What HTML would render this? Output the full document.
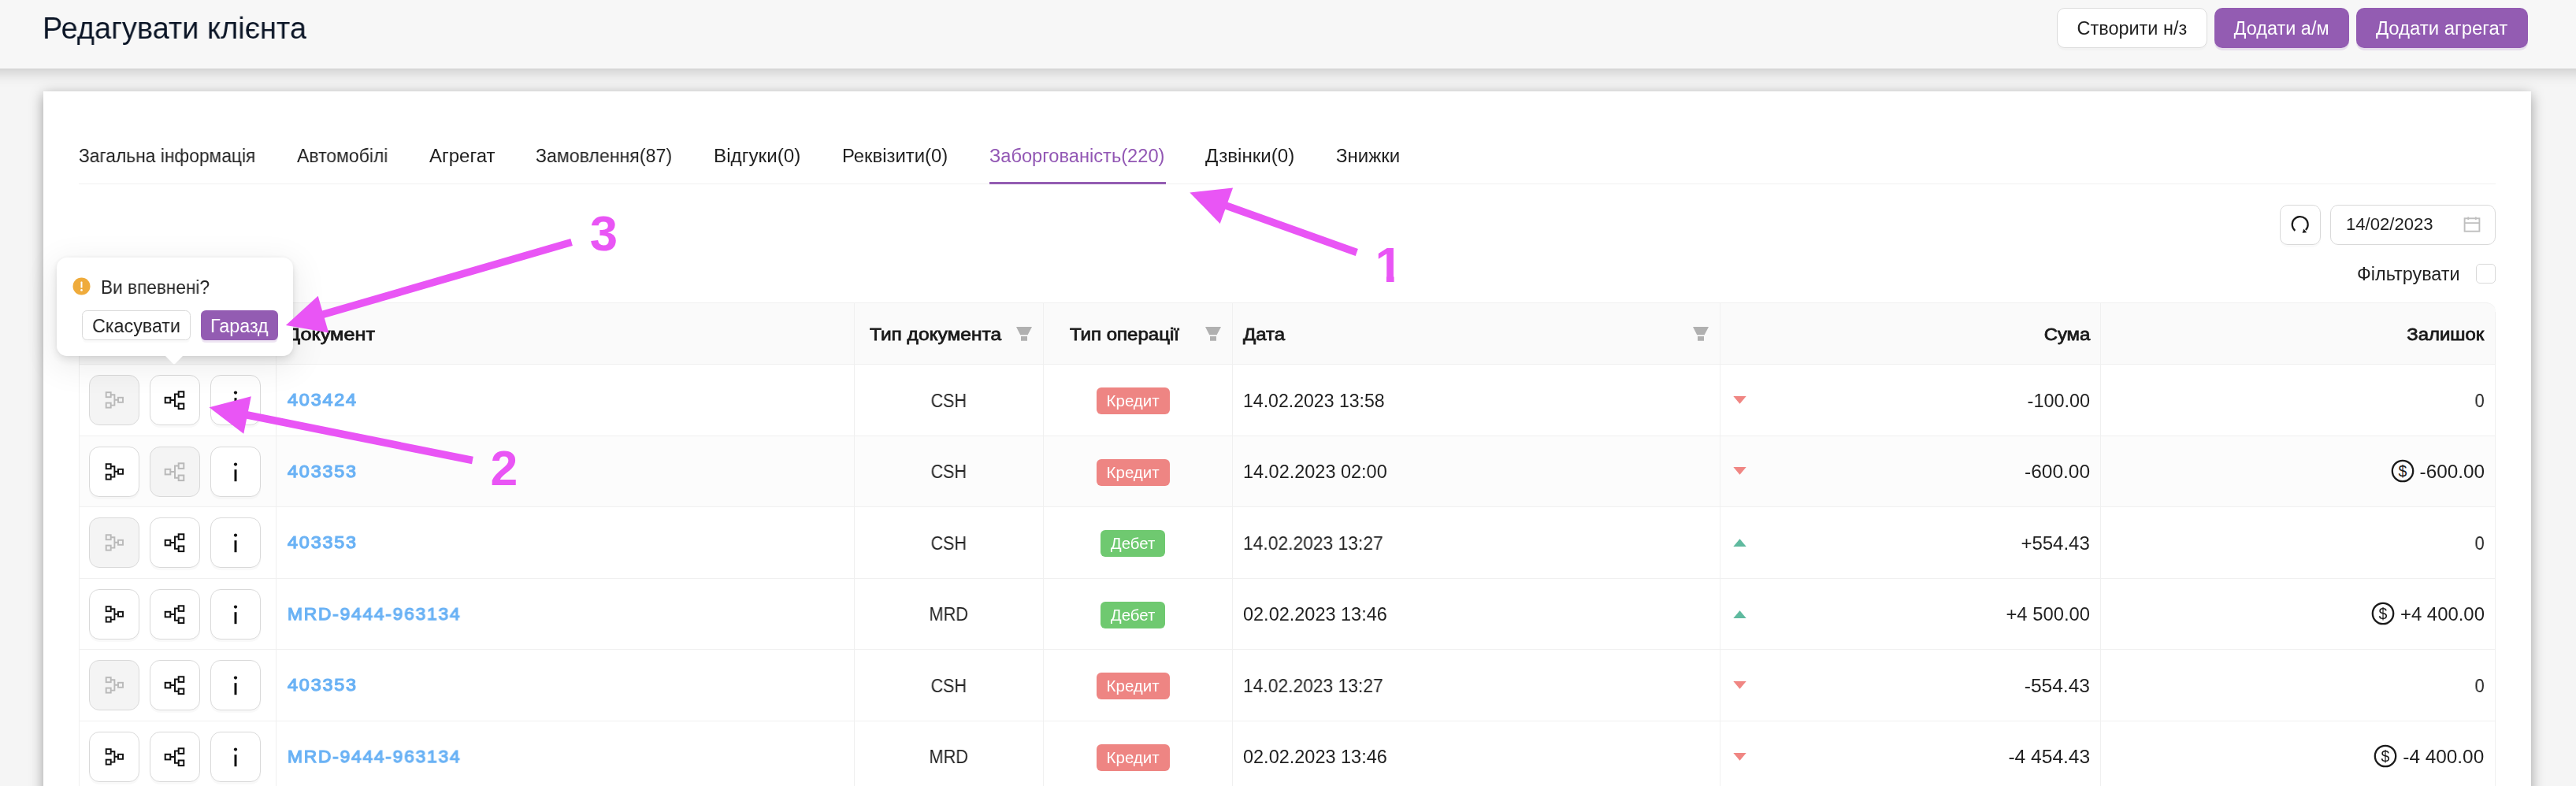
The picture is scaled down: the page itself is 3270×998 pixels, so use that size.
<!DOCTYPE html>
<html lang="uk">
<head>
<meta charset="utf-8">
<title>Редагувати клієнта</title>
<style>
*{box-sizing:border-box;}
html,body{margin:0;padding:0;}
body{width:3270px;height:998px;overflow:hidden;position:relative;background:#f5f5f5;
  font-family:"Liberation Sans","DejaVu Sans",sans-serif;font-size:22.4px;color:#262626;}
.a{position:absolute;}
.t{position:absolute;white-space:nowrap;line-height:1;display:block;will-change:transform;}
#hdr{position:absolute;left:-80px;top:0;width:3430px;height:87px;background:#f7f7f7;
  box-shadow:0 4px 18px rgba(0,0,0,.2);z-index:2;}
.hbtn{position:absolute;top:10px;height:51px;border-radius:10px;}
.hbtn.def{background:#fff;border:1.6px solid #dcdcdc;box-shadow:0 3px 0 rgba(0,0,0,.02);}
.hbtn.pri{background:#935cb2;box-shadow:0 3px 0 rgba(147,92,178,.16);}
#card{position:absolute;left:55px;top:116px;width:3158px;height:940px;background:#fff;
  box-shadow:0 4px 16px rgba(0,0,0,.36);z-index:1;}
#main{position:absolute;left:0;top:0;width:3270px;height:998px;z-index:3;}
#tabline{left:100px;top:232.6px;width:3068px;height:1.6px;background:#f0f0f0;}
#ink{left:1256px;top:230.6px;width:223.6px;height:3.4px;background:#935cb2;}
.ibtn{position:absolute;background:#fff;border:1.6px solid #d9d9d9;border-radius:10px;box-shadow:0 3px 0 rgba(0,0,0,.02);}
/* table */
.hrow{position:absolute;left:100px;top:384px;width:3068px;height:79px;background:#fafafa;border-radius:12px 12px 0 0;
  border-top:1.6px solid #f0f0f0;}
.hl{position:absolute;height:1px;left:100px;width:3068px;background:#f0f0f0;}
.vl{position:absolute;width:1px;top:384px;height:640px;background:#f0f0f0;}
.rowbg{position:absolute;left:100px;width:3068px;background:#fcfcfc;}
.rb{position:absolute;width:64px;height:64px;border-radius:13px;border:1.6px solid #d9d9d9;background:#fff;box-shadow:0 3px 0 rgba(0,0,0,.025);}
.rb.dis{background:#f4f4f4;box-shadow:none;}
.rb svg{position:absolute;left:0;top:0;}
.tag{position:absolute;height:34px;border-radius:6px;}
.tag.red{background:#ee8583;}
.tag.grn{background:#6fc970;}
/* popover */
#pop{position:absolute;left:72px;top:326.5px;width:300px;height:125px;background:#fff;border-radius:13px;
  box-shadow:0 5px 12px rgba(0,0,0,.10),0 10px 40px 6px rgba(0,0,0,.07),0 0 6px rgba(0,0,0,.05);}
#poparrow{position:absolute;left:137px;top:124.5px;width:24px;height:12px;}
.sbtn{position:absolute;top:67.7px;height:37.4px;border-radius:6.4px;}
.sbtn.def{background:#fff;border:1.6px solid #d9d9d9;box-shadow:0 3px 0 rgba(0,0,0,.02);}
.sbtn.pri{background:#935cb2;box-shadow:0 3px 0 rgba(147,92,178,.16);}
#anno{position:absolute;left:0;top:0;z-index:5;}
#hin{position:absolute;left:80px;top:0;width:3270px;height:87px;}

</style>
</head>
<body>
<header id="hdr"><div id="hin">
<span id="t1" class="t" style="left:54.3px;top:16.2px;font-size:39.4px;color:#0b1526;transform:scaleX(0.9631);transform-origin:0 0;">Редагувати клієнта</span>
<div class="hbtn def" style="left:2611.2px;width:191.2px;"><span id="t2" class="t" style="left:24.9px;top:14.2px;font-size:23.3px;color:#1f1f1f;transform:scaleX(1.0071);transform-origin:50% 0;">Створити н/з</span></div>
<div class="hbtn pri" style="left:2811px;width:171px;"><span id="t3" class="t" style="left:24.7px;top:15.2px;font-size:23.3px;color:#ffffff;transform:scaleX(1.0073);transform-origin:50% 0;">Додати а/м</span></div>
<div class="hbtn pri" style="left:2991px;width:218px;"><span id="t4" class="t" style="left:26.7px;top:15.2px;font-size:23.3px;color:#ffffff;transform:scaleX(1.0260);transform-origin:50% 0;">Додати агрегат</span></div>
</div></header>
<div id="card"></div>
<main id="main">
<nav>
<span id="t5" class="t" style="left:100.0px;top:186.6px;font-size:23.3px;color:#1f1f1f;transform:scaleX(0.9789);transform-origin:0 0;">Загальна інформація</span>
<span id="t6" class="t" style="left:376.7px;top:186.6px;font-size:23.3px;color:#1f1f1f;transform:scaleX(0.9869);transform-origin:0 0;">Автомобілі</span>
<span id="t7" class="t" style="left:544.5px;top:186.6px;font-size:23.3px;color:#1f1f1f;transform:scaleX(1.0301);transform-origin:0 0;">Агрегат</span>
<span id="t8" class="t" style="left:680.4px;top:186.6px;font-size:23.3px;color:#1f1f1f;transform:scaleX(0.9933);transform-origin:0 0;">Замовлення(87)</span>
<span id="t9" class="t" style="left:905.7px;top:186.6px;font-size:23.3px;color:#1f1f1f;transform:scaleX(1.0392);transform-origin:0 0;">Відгуки(0)</span>
<span id="t10" class="t" style="left:1069.2px;top:186.6px;font-size:23.3px;color:#1f1f1f;transform:scaleX(1.0231);transform-origin:0 0;">Реквізити(0)</span>
<span id="t11" class="t" style="left:1256.0px;top:186.6px;font-size:23.3px;color:#9257b4;transform:scaleX(1.0147);transform-origin:0 0;">Заборгованість(220)</span>
<span id="t12" class="t" style="left:1530.3px;top:186.6px;font-size:23.3px;color:#1f1f1f;transform:scaleX(1.0362);transform-origin:0 0;">Дзвінки(0)</span>
<span id="t13" class="t" style="left:1696.4px;top:186.6px;font-size:23.3px;color:#1f1f1f;transform:scaleX(1.0324);transform-origin:0 0;">Знижки</span>
</nav>
<div id="tabline" class="a"></div><div id="ink" class="a"></div>
<div class="ibtn" style="left:2894.2px;top:260.2px;width:51.4px;height:50.4px;"><svg width="51.4" height="50.4" viewBox="0 0 51.4 50.4" style="position:absolute;left:-1.6px;top:-1.6px"><path d="M19.4 32.8 A10 10 0 1 1 32.9 32.0" fill="none" stroke="#1a1a1a" stroke-width="2.2"/><path d="M28.6 35.7 L34.2 35.3 L30.4 30.6 Z" fill="#1a1a1a"/></svg></div>
<div class="ibtn" style="left:2958.2px;top:260.2px;width:209.6px;height:50.4px;box-shadow:none;"><svg width="24" height="24" viewBox="0 0 24 24" style="position:absolute;left:166.6px;top:12.2px"><rect x="2.6" y="4.3" width="18.8" height="16.4" fill="none" stroke="#bfbfbf" stroke-width="1.9"/><path d="M2.6 10.2H21.4M7.2 2.6V6M16.8 2.6V6" stroke="#bfbfbf" stroke-width="1.8" fill="none"/></svg></div>
<span id="t14" class="t" style="left:2977.8px;top:275.2px;font-size:21.3px;color:#1f1f1f;transform:scaleX(1.0376);transform-origin:0 0;">14/02/2023</span>
<span id="t15" class="t" style="left:2991.8px;top:337.1px;font-size:23.3px;color:#1f1f1f;transform:scaleX(1.0041);transform-origin:0 0;">Фільтрувати</span>
<div class="a" style="left:3143.4px;top:335.2px;width:24.4px;height:24.4px;border:1.6px solid #d9d9d9;border-radius:5px;background:#fff;"></div>
<section id="table">
<div class="hrow"></div>
<div class="rowbg" style="top:554px;height:89px;"></div>
<div class="hl" style="top:462px;"></div>
<div class="hl" style="top:553px;"></div>
<div class="hl" style="top:643px;"></div>
<div class="hl" style="top:734px;"></div>
<div class="hl" style="top:824px;"></div>
<div class="hl" style="top:915px;"></div>
<div class="hl" style="top:1005px;"></div>
<div class="vl" style="left:100px;top:396px;"></div>
<div class="vl" style="left:350px;top:384px;"></div>
<div class="vl" style="left:1084px;top:384px;"></div>
<div class="vl" style="left:1324px;top:384px;"></div>
<div class="vl" style="left:1564px;top:384px;"></div>
<div class="vl" style="left:2183px;top:384px;"></div>
<div class="vl" style="left:2666px;top:384px;"></div>
<div class="vl" style="left:3167px;top:396px;"></div>
<span id="t16" class="t" style="left:364.0px;top:413.7px;font-size:22.5px;color:#1a1a1a;transform:scaleX(1.1221);transform-origin:0 0;-webkit-text-stroke:0.8px #1a1a1a;">Документ</span>
<span id="t17" class="t" style="left:1103.5px;top:413.7px;font-size:22.5px;color:#1a1a1a;transform:scaleX(1.0882);transform-origin:0 0;-webkit-text-stroke:0.8px #1a1a1a;">Тип документа</span>
<svg class="a" style="left:1289.0px;top:414px;" width="22" height="20" viewBox="0 0 22 20"><path d="M1 1H21L15.6 11.2H6.2Z M7 13H15V18.7H7Z" fill="#b0b0b0"/></svg>
<span id="t18" class="t" style="left:1357.6px;top:413.7px;font-size:22.5px;color:#1a1a1a;transform:scaleX(1.0681);transform-origin:0 0;-webkit-text-stroke:0.8px #1a1a1a;">Тип операції</span>
<svg class="a" style="left:1529.0px;top:414px;" width="22" height="20" viewBox="0 0 22 20"><path d="M1 1H21L15.6 11.2H6.2Z M7 13H15V18.7H7Z" fill="#b0b0b0"/></svg>
<span id="t19" class="t" style="left:1577.5px;top:413.7px;font-size:22.5px;color:#1a1a1a;transform:scaleX(1.0677);transform-origin:0 0;-webkit-text-stroke:0.8px #1a1a1a;">Дата</span>
<svg class="a" style="left:2148.3px;top:414px;" width="22" height="20" viewBox="0 0 22 20"><path d="M1 1H21L15.6 11.2H6.2Z M7 13H15V18.7H7Z" fill="#b0b0b0"/></svg>
<span id="t20" class="t" style="left:2597.6px;top:413.7px;font-size:22.5px;color:#1a1a1a;transform:scaleX(1.0591);transform-origin:100% 0;-webkit-text-stroke:0.8px #1a1a1a;">Сума</span>
<span id="t21" class="t" style="left:3061.4px;top:413.7px;font-size:22.5px;color:#1a1a1a;transform:scaleX(1.0627);transform-origin:100% 0;-webkit-text-stroke:0.8px #1a1a1a;">Залишок</span>
<div class="row">
<div class="rb dis" style="left:113.2px;top:476.0px;"><div style="position:absolute;left:-1.6px;top:0.1px;width:64px;height:64px;"><svg width="64" height="64" viewBox="0 0 64 64"><g fill="none" stroke="#b9b9b9" stroke-width="1.9"><rect x="21.7" y="21.2" width="6" height="6"/><rect x="21.7" y="34.6" width="6" height="6"/><rect x="37" y="27.8" width="6" height="6"/><path d="M27.7 24.2H32.4V37.6H27.7M32.4 30.8H37"/></g></svg></div></div>
<div class="rb" style="left:190.1px;top:476.0px;"><div style="position:absolute;left:-1.6px;top:0.1px;width:64px;height:64px;"><svg width="64" height="64" viewBox="0 0 64 64"><g fill="none" stroke="#111" stroke-width="2"><rect x="19.7" y="27.8" width="6.6" height="6.6"/><rect x="36.7" y="20.3" width="6.6" height="6.6"/><rect x="36.7" y="35.5" width="6.6" height="6.6"/><path d="M36.7 23.6H32V38.8H36.7M26.3 31.1H32"/></g></svg></div></div>
<div class="rb" style="left:267.2px;top:476.0px;"><div style="position:absolute;left:-1.6px;top:0.1px;width:64px;height:64px;"><svg width="64" height="64" viewBox="0 0 64 64"><circle cx="32" cy="21.6" r="2.1" fill="#111"/><rect x="30.5" y="28.2" width="3" height="15" fill="#111"/></svg></div></div>
<span id="t22" class="t" style="left:365.0px;top:496.2px;font-size:22.8px;color:#6ab2f5;letter-spacing:1.80px;transform:scaleX(1.0238);transform-origin:0 0;-webkit-text-stroke:1.25px #6ab2f5;">403424</span>
<span id="t23" class="t" style="left:1180.1px;top:497.6px;font-size:23.0px;color:#1f1f1f;transform:scaleX(0.9328);transform-origin:50% 0;">CSH</span>
<div class="tag red" style="left:1392px;top:492px;width:93px;"><span id="t24" class="t" style="left:14.2px;top:7.6px;font-size:19.6px;color:#ffffff;transform:scaleX(1.0446);transform-origin:50% 0;">Кредит</span></div>
<span id="t25" class="t" style="left:1577.8px;top:497.6px;font-size:23.0px;color:#1f1f1f;transform:scaleX(1.0036);transform-origin:0 0;">14.02.2023 13:58</span>
<svg class="a" style="left:2199.6px;top:502.9px;" width="17" height="10" viewBox="0 0 17 10"><path d="M0.3 0H16.7L8.5 9.8Z" fill="#f08683"/></svg>
<span id="t26" class="t" style="left:2574.8px;top:497.6px;font-size:23.0px;color:#1f1f1f;transform:scaleX(1.0177);transform-origin:100% 0;">-100.00</span>
<span id="t27" class="t" style="left:3140.7px;top:497.6px;font-size:23.0px;color:#1f1f1f;transform:scaleX(0.9612);transform-origin:100% 0;">0</span>
</div>
<div class="row">
<div class="rb" style="left:113.2px;top:567.0px;"><div style="position:absolute;left:-1.6px;top:0.1px;width:64px;height:64px;"><svg width="64" height="64" viewBox="0 0 64 64"><g fill="none" stroke="#111" stroke-width="1.9"><rect x="21.7" y="21.2" width="6" height="6"/><rect x="21.7" y="34.6" width="6" height="6"/><rect x="37" y="27.8" width="6" height="6"/><path d="M27.7 24.2H32.4V37.6H27.7M32.4 30.8H37"/></g></svg></div></div>
<div class="rb dis" style="left:190.1px;top:567.0px;"><div style="position:absolute;left:-1.6px;top:0.1px;width:64px;height:64px;"><svg width="64" height="64" viewBox="0 0 64 64"><g fill="none" stroke="#b9b9b9" stroke-width="2"><rect x="19.7" y="27.8" width="6.6" height="6.6"/><rect x="36.7" y="20.3" width="6.6" height="6.6"/><rect x="36.7" y="35.5" width="6.6" height="6.6"/><path d="M36.7 23.6H32V38.8H36.7M26.3 31.1H32"/></g></svg></div></div>
<div class="rb" style="left:267.2px;top:567.0px;"><div style="position:absolute;left:-1.6px;top:0.1px;width:64px;height:64px;"><svg width="64" height="64" viewBox="0 0 64 64"><circle cx="32" cy="21.6" r="2.1" fill="#111"/><rect x="30.5" y="28.2" width="3" height="15" fill="#111"/></svg></div></div>
<span id="t28" class="t" style="left:365.0px;top:586.7px;font-size:22.8px;color:#6ab2f5;letter-spacing:1.80px;transform:scaleX(1.0238);transform-origin:0 0;-webkit-text-stroke:1.25px #6ab2f5;">403353</span>
<span id="t29" class="t" style="left:1180.1px;top:588.2px;font-size:23.0px;color:#1f1f1f;transform:scaleX(0.9328);transform-origin:50% 0;">CSH</span>
<div class="tag red" style="left:1392px;top:583px;width:93px;"><span id="t30" class="t" style="left:14.2px;top:8.2px;font-size:19.6px;color:#ffffff;transform:scaleX(1.0446);transform-origin:50% 0;">Кредит</span></div>
<span id="t31" class="t" style="left:1577.8px;top:588.2px;font-size:23.0px;color:#1f1f1f;transform:scaleX(1.0203);transform-origin:0 0;">14.02.2023 02:00</span>
<svg class="a" style="left:2199.6px;top:593.4px;" width="17" height="10" viewBox="0 0 17 10"><path d="M0.3 0H16.7L8.5 9.8Z" fill="#f08683"/></svg>
<span id="t32" class="t" style="left:2574.8px;top:588.2px;font-size:23.0px;color:#1f1f1f;transform:scaleX(1.0639);transform-origin:100% 0;">-600.00</span>
<span id="t33" class="t" style="left:3075.5px;top:588.2px;font-size:23.0px;color:#1f1f1f;transform:scaleX(1.0562);transform-origin:100% 0;">-600.00</span>
<svg class="a" style="left:3033.7px;top:582.1px;" width="32" height="32" viewBox="0 0 32 32"><circle cx="16" cy="16" r="13.2" fill="none" stroke="#1a1a1a" stroke-width="2.3"/><text x="16" y="22.6" text-anchor="middle" font-family="Liberation Sans, sans-serif" font-size="19.5" fill="#1a1a1a">$</text></svg>
</div>
<div class="row">
<div class="rb dis" style="left:113.2px;top:657.0px;"><div style="position:absolute;left:-1.6px;top:0.1px;width:64px;height:64px;"><svg width="64" height="64" viewBox="0 0 64 64"><g fill="none" stroke="#b9b9b9" stroke-width="1.9"><rect x="21.7" y="21.2" width="6" height="6"/><rect x="21.7" y="34.6" width="6" height="6"/><rect x="37" y="27.8" width="6" height="6"/><path d="M27.7 24.2H32.4V37.6H27.7M32.4 30.8H37"/></g></svg></div></div>
<div class="rb" style="left:190.1px;top:657.0px;"><div style="position:absolute;left:-1.6px;top:0.1px;width:64px;height:64px;"><svg width="64" height="64" viewBox="0 0 64 64"><g fill="none" stroke="#111" stroke-width="2"><rect x="19.7" y="27.8" width="6.6" height="6.6"/><rect x="36.7" y="20.3" width="6.6" height="6.6"/><rect x="36.7" y="35.5" width="6.6" height="6.6"/><path d="M36.7 23.6H32V38.8H36.7M26.3 31.1H32"/></g></svg></div></div>
<div class="rb" style="left:267.2px;top:657.0px;"><div style="position:absolute;left:-1.6px;top:0.1px;width:64px;height:64px;"><svg width="64" height="64" viewBox="0 0 64 64"><circle cx="32" cy="21.6" r="2.1" fill="#111"/><rect x="30.5" y="28.2" width="3" height="15" fill="#111"/></svg></div></div>
<span id="t34" class="t" style="left:365.0px;top:677.3px;font-size:22.8px;color:#6ab2f5;letter-spacing:1.80px;transform:scaleX(1.0238);transform-origin:0 0;-webkit-text-stroke:1.25px #6ab2f5;">403353</span>
<span id="t35" class="t" style="left:1180.1px;top:678.7px;font-size:23.0px;color:#1f1f1f;transform:scaleX(0.9328);transform-origin:50% 0;">CSH</span>
<div class="tag grn" style="left:1397px;top:673px;width:82px;"><span id="t36" class="t" style="left:13.9px;top:7.7px;font-size:19.6px;color:#ffffff;transform:scaleX(1.0430);transform-origin:50% 0;">Дебет</span></div>
<span id="t37" class="t" style="left:1577.8px;top:678.7px;font-size:23.0px;color:#1f1f1f;transform:scaleX(0.9924);transform-origin:0 0;">14.02.2023 13:27</span>
<svg class="a" style="left:2199.6px;top:684.0px;" width="17" height="10" viewBox="0 0 17 10"><path d="M0.3 10H16.7L8.5 0.2Z" fill="#5fba9f"/></svg>
<span id="t38" class="t" style="left:2569.0px;top:678.7px;font-size:23.0px;color:#1f1f1f;transform:scaleX(1.0432);transform-origin:100% 0;">+554.43</span>
<span id="t39" class="t" style="left:3140.7px;top:678.7px;font-size:23.0px;color:#1f1f1f;transform:scaleX(0.9612);transform-origin:100% 0;">0</span>
</div>
<div class="row">
<div class="rb" style="left:113.2px;top:748.0px;"><div style="position:absolute;left:-1.6px;top:0.1px;width:64px;height:64px;"><svg width="64" height="64" viewBox="0 0 64 64"><g fill="none" stroke="#111" stroke-width="1.9"><rect x="21.7" y="21.2" width="6" height="6"/><rect x="21.7" y="34.6" width="6" height="6"/><rect x="37" y="27.8" width="6" height="6"/><path d="M27.7 24.2H32.4V37.6H27.7M32.4 30.8H37"/></g></svg></div></div>
<div class="rb" style="left:190.1px;top:748.0px;"><div style="position:absolute;left:-1.6px;top:0.1px;width:64px;height:64px;"><svg width="64" height="64" viewBox="0 0 64 64"><g fill="none" stroke="#111" stroke-width="2"><rect x="19.7" y="27.8" width="6.6" height="6.6"/><rect x="36.7" y="20.3" width="6.6" height="6.6"/><rect x="36.7" y="35.5" width="6.6" height="6.6"/><path d="M36.7 23.6H32V38.8H36.7M26.3 31.1H32"/></g></svg></div></div>
<div class="rb" style="left:267.2px;top:748.0px;"><div style="position:absolute;left:-1.6px;top:0.1px;width:64px;height:64px;"><svg width="64" height="64" viewBox="0 0 64 64"><circle cx="32" cy="21.6" r="2.1" fill="#111"/><rect x="30.5" y="28.2" width="3" height="15" fill="#111"/></svg></div></div>
<span id="t40" class="t" style="left:365.0px;top:767.8px;font-size:22.8px;color:#6ab2f5;letter-spacing:1.80px;transform:scaleX(0.9973);transform-origin:0 0;-webkit-text-stroke:1.25px #6ab2f5;">MRD-9444-963134</span>
<span id="t41" class="t" style="left:1178.2px;top:769.3px;font-size:23.0px;color:#1f1f1f;transform:scaleX(0.9448);transform-origin:50% 0;">MRD</span>
<div class="tag grn" style="left:1397px;top:764px;width:82px;"><span id="t42" class="t" style="left:13.9px;top:7.8px;font-size:19.6px;color:#ffffff;transform:scaleX(1.0430);transform-origin:50% 0;">Дебет</span></div>
<span id="t43" class="t" style="left:1577.8px;top:769.3px;font-size:23.0px;color:#1f1f1f;transform:scaleX(1.0209);transform-origin:0 0;">02.02.2023 13:46</span>
<svg class="a" style="left:2199.6px;top:774.5px;" width="17" height="10" viewBox="0 0 17 10"><path d="M0.3 10H16.7L8.5 0.2Z" fill="#5fba9f"/></svg>
<span id="t44" class="t" style="left:2549.8px;top:769.3px;font-size:23.0px;color:#1f1f1f;transform:scaleX(1.0343);transform-origin:100% 0;">+4 500.00</span>
<span id="t45" class="t" style="left:3050.5px;top:769.3px;font-size:23.0px;color:#1f1f1f;transform:scaleX(1.0392);transform-origin:100% 0;">+4 400.00</span>
<svg class="a" style="left:3008.5px;top:763.2px;" width="32" height="32" viewBox="0 0 32 32"><circle cx="16" cy="16" r="13.2" fill="none" stroke="#1a1a1a" stroke-width="2.3"/><text x="16" y="22.6" text-anchor="middle" font-family="Liberation Sans, sans-serif" font-size="19.5" fill="#1a1a1a">$</text></svg>
</div>
<div class="row">
<div class="rb dis" style="left:113.2px;top:838.0px;"><div style="position:absolute;left:-1.6px;top:0.1px;width:64px;height:64px;"><svg width="64" height="64" viewBox="0 0 64 64"><g fill="none" stroke="#b9b9b9" stroke-width="1.9"><rect x="21.7" y="21.2" width="6" height="6"/><rect x="21.7" y="34.6" width="6" height="6"/><rect x="37" y="27.8" width="6" height="6"/><path d="M27.7 24.2H32.4V37.6H27.7M32.4 30.8H37"/></g></svg></div></div>
<div class="rb" style="left:190.1px;top:838.0px;"><div style="position:absolute;left:-1.6px;top:0.1px;width:64px;height:64px;"><svg width="64" height="64" viewBox="0 0 64 64"><g fill="none" stroke="#111" stroke-width="2"><rect x="19.7" y="27.8" width="6.6" height="6.6"/><rect x="36.7" y="20.3" width="6.6" height="6.6"/><rect x="36.7" y="35.5" width="6.6" height="6.6"/><path d="M36.7 23.6H32V38.8H36.7M26.3 31.1H32"/></g></svg></div></div>
<div class="rb" style="left:267.2px;top:838.0px;"><div style="position:absolute;left:-1.6px;top:0.1px;width:64px;height:64px;"><svg width="64" height="64" viewBox="0 0 64 64"><circle cx="32" cy="21.6" r="2.1" fill="#111"/><rect x="30.5" y="28.2" width="3" height="15" fill="#111"/></svg></div></div>
<span id="t46" class="t" style="left:365.0px;top:858.4px;font-size:22.8px;color:#6ab2f5;letter-spacing:1.80px;transform:scaleX(1.0238);transform-origin:0 0;-webkit-text-stroke:1.25px #6ab2f5;">403353</span>
<span id="t47" class="t" style="left:1180.1px;top:859.8px;font-size:23.0px;color:#1f1f1f;transform:scaleX(0.9328);transform-origin:50% 0;">CSH</span>
<div class="tag red" style="left:1392px;top:854px;width:93px;"><span id="t48" class="t" style="left:14.2px;top:7.8px;font-size:19.6px;color:#ffffff;transform:scaleX(1.0446);transform-origin:50% 0;">Кредит</span></div>
<span id="t49" class="t" style="left:1577.8px;top:859.8px;font-size:23.0px;color:#1f1f1f;transform:scaleX(0.9924);transform-origin:0 0;">14.02.2023 13:27</span>
<svg class="a" style="left:2199.6px;top:865.1px;" width="17" height="10" viewBox="0 0 17 10"><path d="M0.3 0H16.7L8.5 9.8Z" fill="#f08683"/></svg>
<span id="t50" class="t" style="left:2574.8px;top:859.8px;font-size:23.0px;color:#1f1f1f;transform:scaleX(1.0677);transform-origin:100% 0;">-554.43</span>
<span id="t51" class="t" style="left:3140.7px;top:859.8px;font-size:23.0px;color:#1f1f1f;transform:scaleX(0.9612);transform-origin:100% 0;">0</span>
</div>
<div class="row">
<div class="rb" style="left:113.2px;top:929.0px;"><div style="position:absolute;left:-1.6px;top:0.1px;width:64px;height:64px;"><svg width="64" height="64" viewBox="0 0 64 64"><g fill="none" stroke="#111" stroke-width="1.9"><rect x="21.7" y="21.2" width="6" height="6"/><rect x="21.7" y="34.6" width="6" height="6"/><rect x="37" y="27.8" width="6" height="6"/><path d="M27.7 24.2H32.4V37.6H27.7M32.4 30.8H37"/></g></svg></div></div>
<div class="rb" style="left:190.1px;top:929.0px;"><div style="position:absolute;left:-1.6px;top:0.1px;width:64px;height:64px;"><svg width="64" height="64" viewBox="0 0 64 64"><g fill="none" stroke="#111" stroke-width="2"><rect x="19.7" y="27.8" width="6.6" height="6.6"/><rect x="36.7" y="20.3" width="6.6" height="6.6"/><rect x="36.7" y="35.5" width="6.6" height="6.6"/><path d="M36.7 23.6H32V38.8H36.7M26.3 31.1H32"/></g></svg></div></div>
<div class="rb" style="left:267.2px;top:929.0px;"><div style="position:absolute;left:-1.6px;top:0.1px;width:64px;height:64px;"><svg width="64" height="64" viewBox="0 0 64 64"><circle cx="32" cy="21.6" r="2.1" fill="#111"/><rect x="30.5" y="28.2" width="3" height="15" fill="#111"/></svg></div></div>
<span id="t52" class="t" style="left:365.0px;top:948.9px;font-size:22.8px;color:#6ab2f5;letter-spacing:1.80px;transform:scaleX(0.9973);transform-origin:0 0;-webkit-text-stroke:1.25px #6ab2f5;">MRD-9444-963134</span>
<span id="t53" class="t" style="left:1178.2px;top:950.4px;font-size:23.0px;color:#1f1f1f;transform:scaleX(0.9448);transform-origin:50% 0;">MRD</span>
<div class="tag red" style="left:1392px;top:945px;width:93px;"><span id="t54" class="t" style="left:14.2px;top:7.9px;font-size:19.6px;color:#ffffff;transform:scaleX(1.0446);transform-origin:50% 0;">Кредит</span></div>
<span id="t55" class="t" style="left:1577.8px;top:950.4px;font-size:23.0px;color:#1f1f1f;transform:scaleX(1.0209);transform-origin:0 0;">02.02.2023 13:46</span>
<svg class="a" style="left:2199.6px;top:955.6px;" width="17" height="10" viewBox="0 0 17 10"><path d="M0.3 0H16.7L8.5 9.8Z" fill="#f08683"/></svg>
<span id="t56" class="t" style="left:2555.6px;top:950.4px;font-size:23.0px;color:#1f1f1f;transform:scaleX(1.0679);transform-origin:100% 0;">-4 454.43</span>
<span id="t57" class="t" style="left:3056.3px;top:950.4px;font-size:23.0px;color:#1f1f1f;transform:scaleX(1.0586);transform-origin:100% 0;">-4 400.00</span>
<svg class="a" style="left:3012.2px;top:944.3px;" width="32" height="32" viewBox="0 0 32 32"><circle cx="16" cy="16" r="13.2" fill="none" stroke="#1a1a1a" stroke-width="2.3"/><text x="16" y="22.6" text-anchor="middle" font-family="Liberation Sans, sans-serif" font-size="19.5" fill="#1a1a1a">$</text></svg>
</div>
</section>
<div id="pop">
<svg class="a" style="left:19.5px;top:25.5px;" width="23" height="23" viewBox="0 0 23 23"><circle cx="11.5" cy="11.5" r="11" fill="#efab3b"/><rect x="10.5" y="5.6" width="2" height="8" rx="0.6" fill="#fff"/><circle cx="11.5" cy="16.4" r="1.3" fill="#fff"/></svg>
<span id="t58" class="t" style="left:55.8px;top:27.1px;font-size:23.3px;color:#1f1f1f;transform:scaleX(0.9707);transform-origin:0 0;">Ви впевнені?</span>
<div class="sbtn def" style="left:32.3px;width:137.6px;"><span id="t59" class="t" style="left:11.8px;top:7.5px;font-size:23.3px;color:#1f1f1f;transform:scaleX(0.9979);transform-origin:50% 0;">Скасувати</span></div>
<div class="sbtn pri" style="left:183.1px;width:97.9px;"><span id="t60" class="t" style="left:12.1px;top:8.5px;font-size:23.3px;color:#ffffff;transform:scaleX(0.9975);transform-origin:50% 0;">Гаразд</span></div>
<svg id="poparrow" viewBox="0 0 24 12"><path d="M0 0H24L13.6 10.6Q12 12 10.4 10.6Z" fill="#fff"/></svg>
</div>
</main>
<svg id="anno" width="3270" height="998" viewBox="0 0 3270 998">
<polygon points="1510.3,244.5 1548.7,284.0 1555.3,265.7 1720.7,325.1 1723.9,316.1 1558.5,256.7 1565.1,238.4" fill="#e955f5"/>
<polygon points="362.9,412.9 417.2,422.4 411.8,403.7 726.9,312.1 724.3,302.9 409.1,394.5 403.7,375.8" fill="#e955f5"/>
<polygon points="265.5,517.3 309.3,550.8 313.1,531.8 599.0,589.2 600.8,579.8 315.0,522.3 318.8,503.3" fill="#e955f5"/>
<clipPath id="c1"><polygon points="1747.6,310.8 1769.6,310.8 1769.6,358.8 1759.9,358.8 1759.9,347.8 1747.6,347.8"/></clipPath>
<text x="1745.4" y="357.8" font-family="Liberation Sans, sans-serif" font-weight="700" font-size="63.2" fill="#e955f5" clip-path="url(#c1)">1</text>
<text x="748.7" y="318.0" font-family="Liberation Sans, sans-serif" font-weight="700" font-size="63.5" fill="#e955f5">3</text>
<text x="622.6" y="615.8" font-family="Liberation Sans, sans-serif" font-weight="700" font-size="62.5" fill="#e955f5">2</text>
</svg>
</body>
</html>
